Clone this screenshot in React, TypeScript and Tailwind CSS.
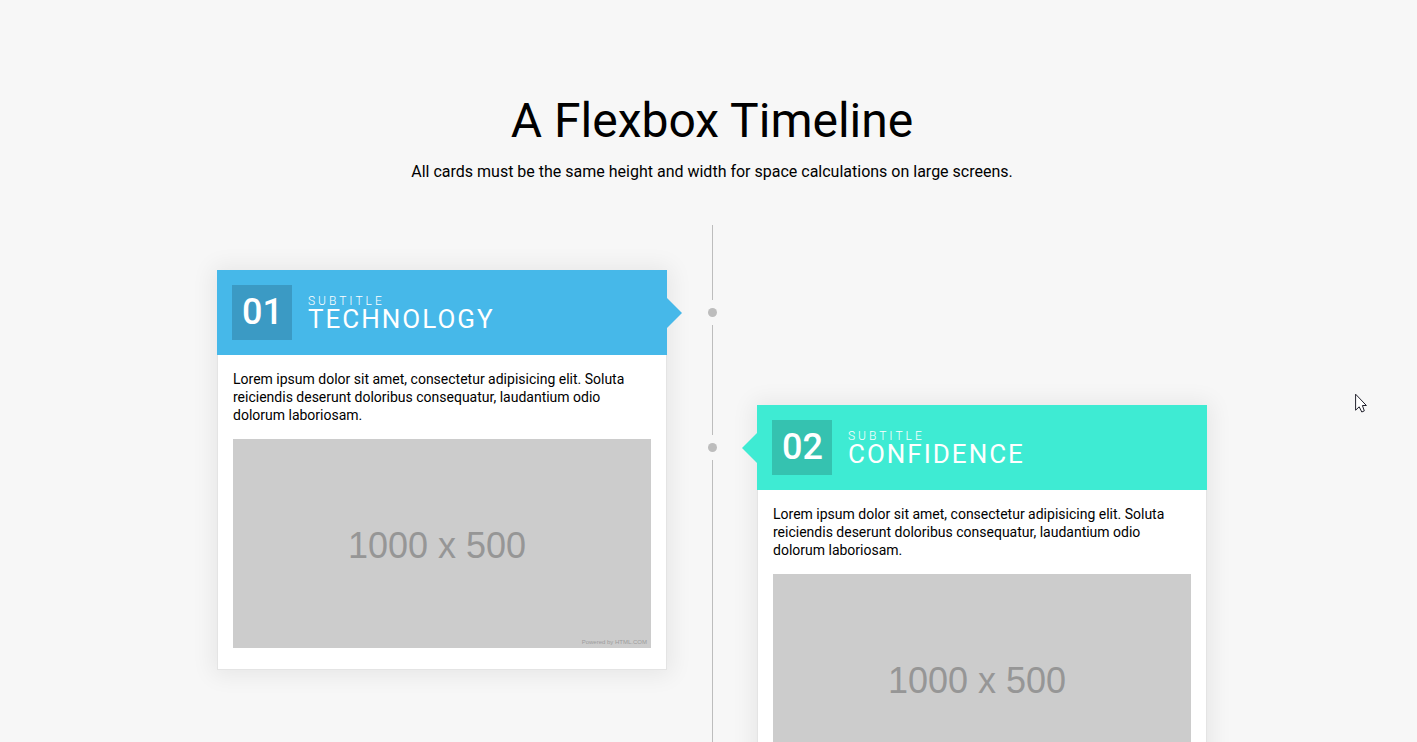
type CardProps = {
  number: string;
  title: string;
  side: "left" | "right";
};

function Placeholder() {
  return (
    <svg
      viewBox="0 0 418 209"
      role="img"
      aria-label="1000 x 500"
      className="block w-full bg-[#cccccc] font-['Liberation_Sans',sans-serif]"
    >
      <text x="204" y="119" textAnchor="middle" fontSize="36" fill="#969696">
        1000 x 500
      </text>
      <text x="414" y="205" textAnchor="end" fontSize="6" fill="#9c9c9c">
        Powered by HTML.COM
      </text>
    </svg>
  );
}

function Arrow({ side }: { side: "left" | "right" }) {
  return side === "left" ? (
    <svg
      viewBox="0 0 15 30"
      aria-hidden="true"
      className="absolute top-7 left-full h-[30px] w-[15px] fill-[#46b8e9]"
    >
      <path d="M0 0 15 15 0 30Z" />
    </svg>
  ) : (
    <svg
      viewBox="0 0 15 30"
      aria-hidden="true"
      className="absolute top-7 right-full h-[30px] w-[15px] fill-[#3eebd3]"
    >
      <path d="M15 0 0 15 15 30Z" />
    </svg>
  );
}

function Card({ number, title, side }: CardProps) {
  return (
    <article className="relative bg-white shadow-[0_1px_22px_4px_rgba(0,0,0,0.07)]">
      <Arrow side={side} />
      <header
        className={`flex items-center gap-4 p-[15px] text-white ${
          side === "left" ? "bg-[#46b8e9]" : "bg-[#3eebd3]"
        }`}
      >
        <span
          className={`flex h-[55px] w-[60px] items-center pb-0.5 pl-[10px] text-4xl font-medium ${
            side === "left" ? "bg-[#3b9ac4]" : "bg-[#35c2b0]"
          }`}
        >
          {number}
        </span>
        <h2 className="pb-0.5 text-[26px] leading-[22px] tracking-[2px] uppercase">
          <small className="block text-xs leading-[14px] font-light tracking-[3px]">
            Subtitle
          </small>
          {title}
        </h2>
      </header>
      <div className="border border-t-0 border-[#e4e4e4] px-[15px] pt-[15px] pb-[21px]">
        <p className="mb-[15px] text-sm leading-[18px]">
          Lorem ipsum dolor sit amet, consectetur adipisicing elit. Soluta
          reiciendis deserunt doloribus consequatur, laudantium odio dolorum
          laboriosam.
        </p>
        <Placeholder />
      </div>
    </article>
  );
}

function Dot() {
  return (
    <span className="flex h-[25px] items-center justify-center">
      <span className="size-[9px] rounded-full bg-[#bdbdbd]" />
    </span>
  );
}

export default function App() {
  return (
    <main className="relative h-screen overflow-hidden bg-[#f7f7f7] pt-[93px] pl-[7px] font-[Roboto,sans-serif] text-black">
      <header className="text-center">
        <h1 className="text-5xl leading-[56px]">A Flexbox Timeline</h1>
        <p className="mt-3 text-base leading-[22px]">
          All cards must be the same height and width for space calculations on
          large screens.
        </p>
      </header>
      <section className="mx-auto mt-[42px] grid max-w-[990px] grid-cols-[1fr_90px_1fr]">
        <div className="pt-[45px]">
          <Card number="01" title="Technology" side="left" />
        </div>
        <div className="flex flex-col items-center" aria-hidden="true">
          <span className="h-[75px] w-px bg-[#bdbdbd]" />
          <Dot />
          <span className="h-[110px] w-px bg-[#bdbdbd]" />
          <Dot />
          <span className="w-px grow bg-[#bdbdbd]" />
        </div>
        <div className="pt-[180px]">
          <Card number="02" title="Confidence" side="right" />
        </div>
      </section>
      <svg
        viewBox="0 0 12 20"
        aria-hidden="true"
        className="absolute top-[393px] right-[50px] h-5 w-3"
      >
        <path
          d="M.6 1.2V17.2L4.2 13.8 6.8 19 9.3 17.9 7.4 12.5H11.4Z"
          fill="white"
          stroke="#20202c"
          strokeWidth="1"
        />
      </svg>
    </main>
  );
}
